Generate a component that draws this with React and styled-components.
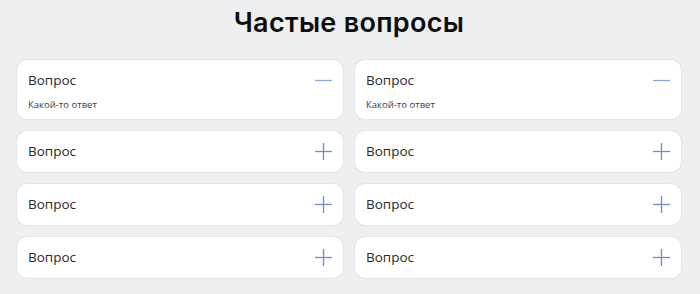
import React, { useState } from "react";
import styled, { createGlobalStyle } from "styled-components";

const GlobalStyle = createGlobalStyle`
  html, body {
    margin: 0;
    padding: 0;
    background: #eeeff1;
  }
  body {
    font-family: "Open Sans", "Noto Sans", sans-serif;
  }
`;

const Page = styled.div`
  width: 700px;
  height: 294px;
  padding: 0 19px 0 17px;
  box-sizing: border-box;
  background: #eeeff1;
`;

const Title = styled.h1`
  margin: 5px 0 19px;
  font-family: "Inter", "Noto Sans", sans-serif;
  font-size: 27px;
  line-height: 36px;
  font-weight: 600;
  color: #0c0c0c;
  text-align: center;
  letter-spacing: 0.3px;
`;

const Grid = styled.div`
  display: grid;
  grid-template-columns: 1fr 1fr;
  column-gap: 12px;
  row-gap: 12px;
  align-items: start;
`;

const Card = styled.div`
  background: #ffffff;
  border-radius: 10px;
  box-shadow: 0 0 0 1px #e4e5e8;
  padding: 10px 11px ${(p) => (p.$open ? "7px" : "10px")};
  cursor: pointer;
`;

const Head = styled.div`
  display: flex;
  align-items: center;
  justify-content: space-between;
  height: 21px;
`;

const Question = styled.span`
  font-size: 13.5px;
  line-height: 21px;
  color: #2a2a2a;
`;

const Answer = styled.p`
  margin: 7px 0 0;
  font-size: 9.5px;
  line-height: 14px;
  color: #3d3d3d;
`;

const Toggle = styled.svg`
  width: 17px;
  height: 17px;
  flex-shrink: 0;
`;

function Icon({ open }) {
  return (
    <Toggle viewBox="0 0 17 17">
      <line x1="0" y1="8.5" x2="17" y2="8.5" stroke={open ? "#8ea5dc" : "#6f8bd4"} strokeWidth="1.3" />
      {!open && <line x1="8.5" y1="0" x2="8.5" y2="17" stroke="#6f8bd4" strokeWidth="1.3" />}
    </Toggle>
  );
}

const initial = [true, true, false, false, false, false, false, false];

export default function App() {
  const [open, setOpen] = useState(initial);

  const toggle = (i) => setOpen((o) => o.map((v, j) => (j === i ? !v : v)));

  return (
    <Page>
      <GlobalStyle />
      <Title>Частые вопросы</Title>
      <Grid>
        {open.map((isOpen, i) => (
          <Card key={i} $open={isOpen} onClick={() => toggle(i)}>
            <Head>
              <Question>Вопрос</Question>
              <Icon open={isOpen} />
            </Head>
            {isOpen && <Answer>Какой-то ответ</Answer>}
          </Card>
        ))}
      </Grid>
    </Page>
  );
}
